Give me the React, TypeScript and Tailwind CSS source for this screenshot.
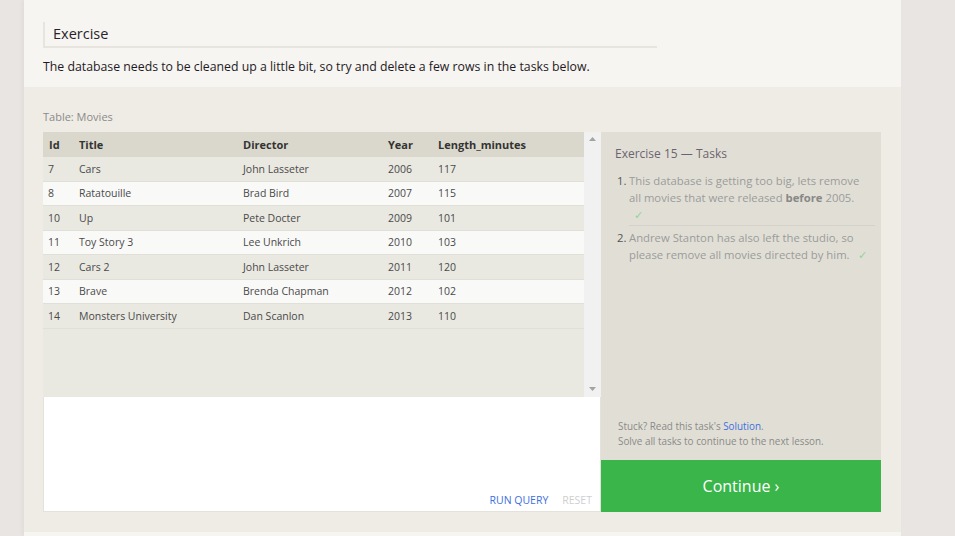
import React from "react";

const movies = [
  { id: 7, title: "Cars", director: "John Lasseter", year: 2006, length: 117 },
  { id: 8, title: "Ratatouille", director: "Brad Bird", year: 2007, length: 115 },
  { id: 10, title: "Up", director: "Pete Docter", year: 2009, length: 101 },
  { id: 11, title: "Toy Story 3", director: "Lee Unkrich", year: 2010, length: 103 },
  { id: 12, title: "Cars 2", director: "John Lasseter", year: 2011, length: 120 },
  { id: 13, title: "Brave", director: "Brenda Chapman", year: 2012, length: 102 },
  { id: 14, title: "Monsters University", director: "Dan Scanlon", year: 2013, length: 110 },
];

const Check = ({ className = "" }: { className?: string }) => (
  <span className={`text-[#8fd39a] ${className}`}>✓</span>
);

const App = () => {
  return (
    <div
      className="w-full min-h-[536px] bg-[#e9e5e2] overflow-hidden"
      style={{ fontFamily: '"Open Sans", "Liberation Sans", sans-serif' }}
    >
      <div className="ml-[24px] w-[877px] shadow-[-2px_0_4px_rgba(0,0,0,0.04)]">
        {/* intro */}
        <div className="bg-[#f6f5f1] px-[19px] pt-[22px] h-[87px]">
          <div className="w-[614px] h-[26px] border-l-2 border-b-2 border-[#e7e5dd] pl-[8px] flex items-center">
            <h2 className="text-[14.5px] text-[#2a1f2a] leading-none">Exercise</h2>
          </div>
          <p className="mt-[10px] text-[12.3px] text-[#1f1a1f] leading-[18px]">
            The database needs to be cleaned up a little bit, so try and delete a few rows in the tasks below.
          </p>
        </div>

        {/* exercise zone */}
        <div className="bg-[#efece5] px-[19px] pt-[22px] pb-[20px]">
          <div className="text-[11px] text-[#8a8a8a] leading-[16px] h-[23px]">Table: Movies</div>

          <div className="flex w-[838px]">
            {/* left column */}
            <div className="w-[558px] flex flex-col">
              <div className="h-[265px] flex bg-[#e9e8e1]">
                <div className="flex-1">
                  <div className="h-[25px] bg-[#dad8cd] flex items-center pt-[1px] text-[11px] font-bold text-[#333]">
                    <div className="w-[36px] pl-[6px]">Id</div>
                    <div className="w-[164px]">Title</div>
                    <div className="w-[145px]">Director</div>
                    <div className="w-[50px]">Year</div>
                    <div className="flex-1">Length_minutes</div>
                  </div>
                  {movies.map((m, i) => (
                    <div
                      key={m.id}
                      className={`h-[24.5px] flex items-center pt-[2px] text-[10.5px] text-[#4a4a4a] border-b border-[#e0dfd8] ${
                        i % 2 === 1 ? "bg-[#f9f9f8]" : "bg-[#e9e8e1]"
                      }`}
                    >
                      <div className="w-[36px] pl-[5px]">{m.id}</div>
                      <div className="w-[164px]">{m.title}</div>
                      <div className="w-[145px]">{m.director}</div>
                      <div className="w-[50px]">{m.year}</div>
                      <div className="flex-1">{m.length}</div>
                    </div>
                  ))}
                </div>
                <div className="w-[17px] bg-[#f1f1f1] flex flex-col justify-between items-center py-[5px]">
                  <svg width="7" height="5" viewBox="0 0 7 5">
                    <path d="M3.5 0 L7 4 L0 4 Z" fill="#a3a3a3" />
                  </svg>
                  <svg width="7" height="5" viewBox="0 0 7 5">
                    <path d="M0 0 L7 0 L3.5 4 Z" fill="#a3a3a3" />
                  </svg>
                </div>
              </div>
              <div className="h-[115px] bg-white border border-t-0 border-[#e4e2da] flex items-end justify-end gap-[14px] pr-[8px] pb-[6px]">
                <span className="text-[10.5px] text-[#3d6fe0] leading-none">RUN QUERY</span>
                <span className="text-[10.5px] text-[#cfcfcf] leading-none">RESET</span>
              </div>
            </div>

            {/* right column */}
            <div className="w-[280px] flex flex-col">
              <div className="flex-1 bg-[#e1dfd5] pl-[14px] pr-[6px] pt-[14px] pb-[11px] flex flex-col">
                <div className="text-[12px] text-[#6b6470] leading-[16px]">Exercise 15 — Tasks</div>
                <ol className="mt-[10px] text-[11.3px] leading-[17px] text-[#9b9b9b]">
                  <li className="flex pb-[3px]">
                    <span className="w-[14px] pl-[2px] text-[#555]">1.</span>
                    <div className="flex-1 border-b border-[#d3d1c8] pb-[2px] pr-[12px]">
                      This database is getting too big, lets remove all movies that were released{" "}
                      <b className="text-[#888]">before</b> 2005.
                      <div className="pl-[5px]">
                        <Check />
                      </div>
                    </div>
                  </li>
                  <li className="flex">
                    <span className="w-[14px] pl-[2px] text-[#555]">2.</span>
                    <div className="flex-1 pr-[6px]">
                      Andrew Stanton has also left the studio, so please remove all movies directed by him.
                      <Check className="ml-[8px]" />
                    </div>
                  </li>
                </ol>
                <div className="mt-auto pl-[3px] text-[9.9px] text-[#8a8a8a] leading-[15px]">
                  <div>
                    Stuck? Read this task's <span className="text-[#3d6fe0]">Solution</span>.
                  </div>
                  <div>Solve all tasks to continue to the next lesson.</div>
                </div>
              </div>
              <div className="h-[52px] bg-[#39b54a] flex items-center justify-center text-white text-[16px]">
                Continue ›
              </div>
            </div>
          </div>
        </div>
        <div className="h-[4px] bg-[#f6f5f1]" />
      </div>
    </div>
  );
};

export default App;
